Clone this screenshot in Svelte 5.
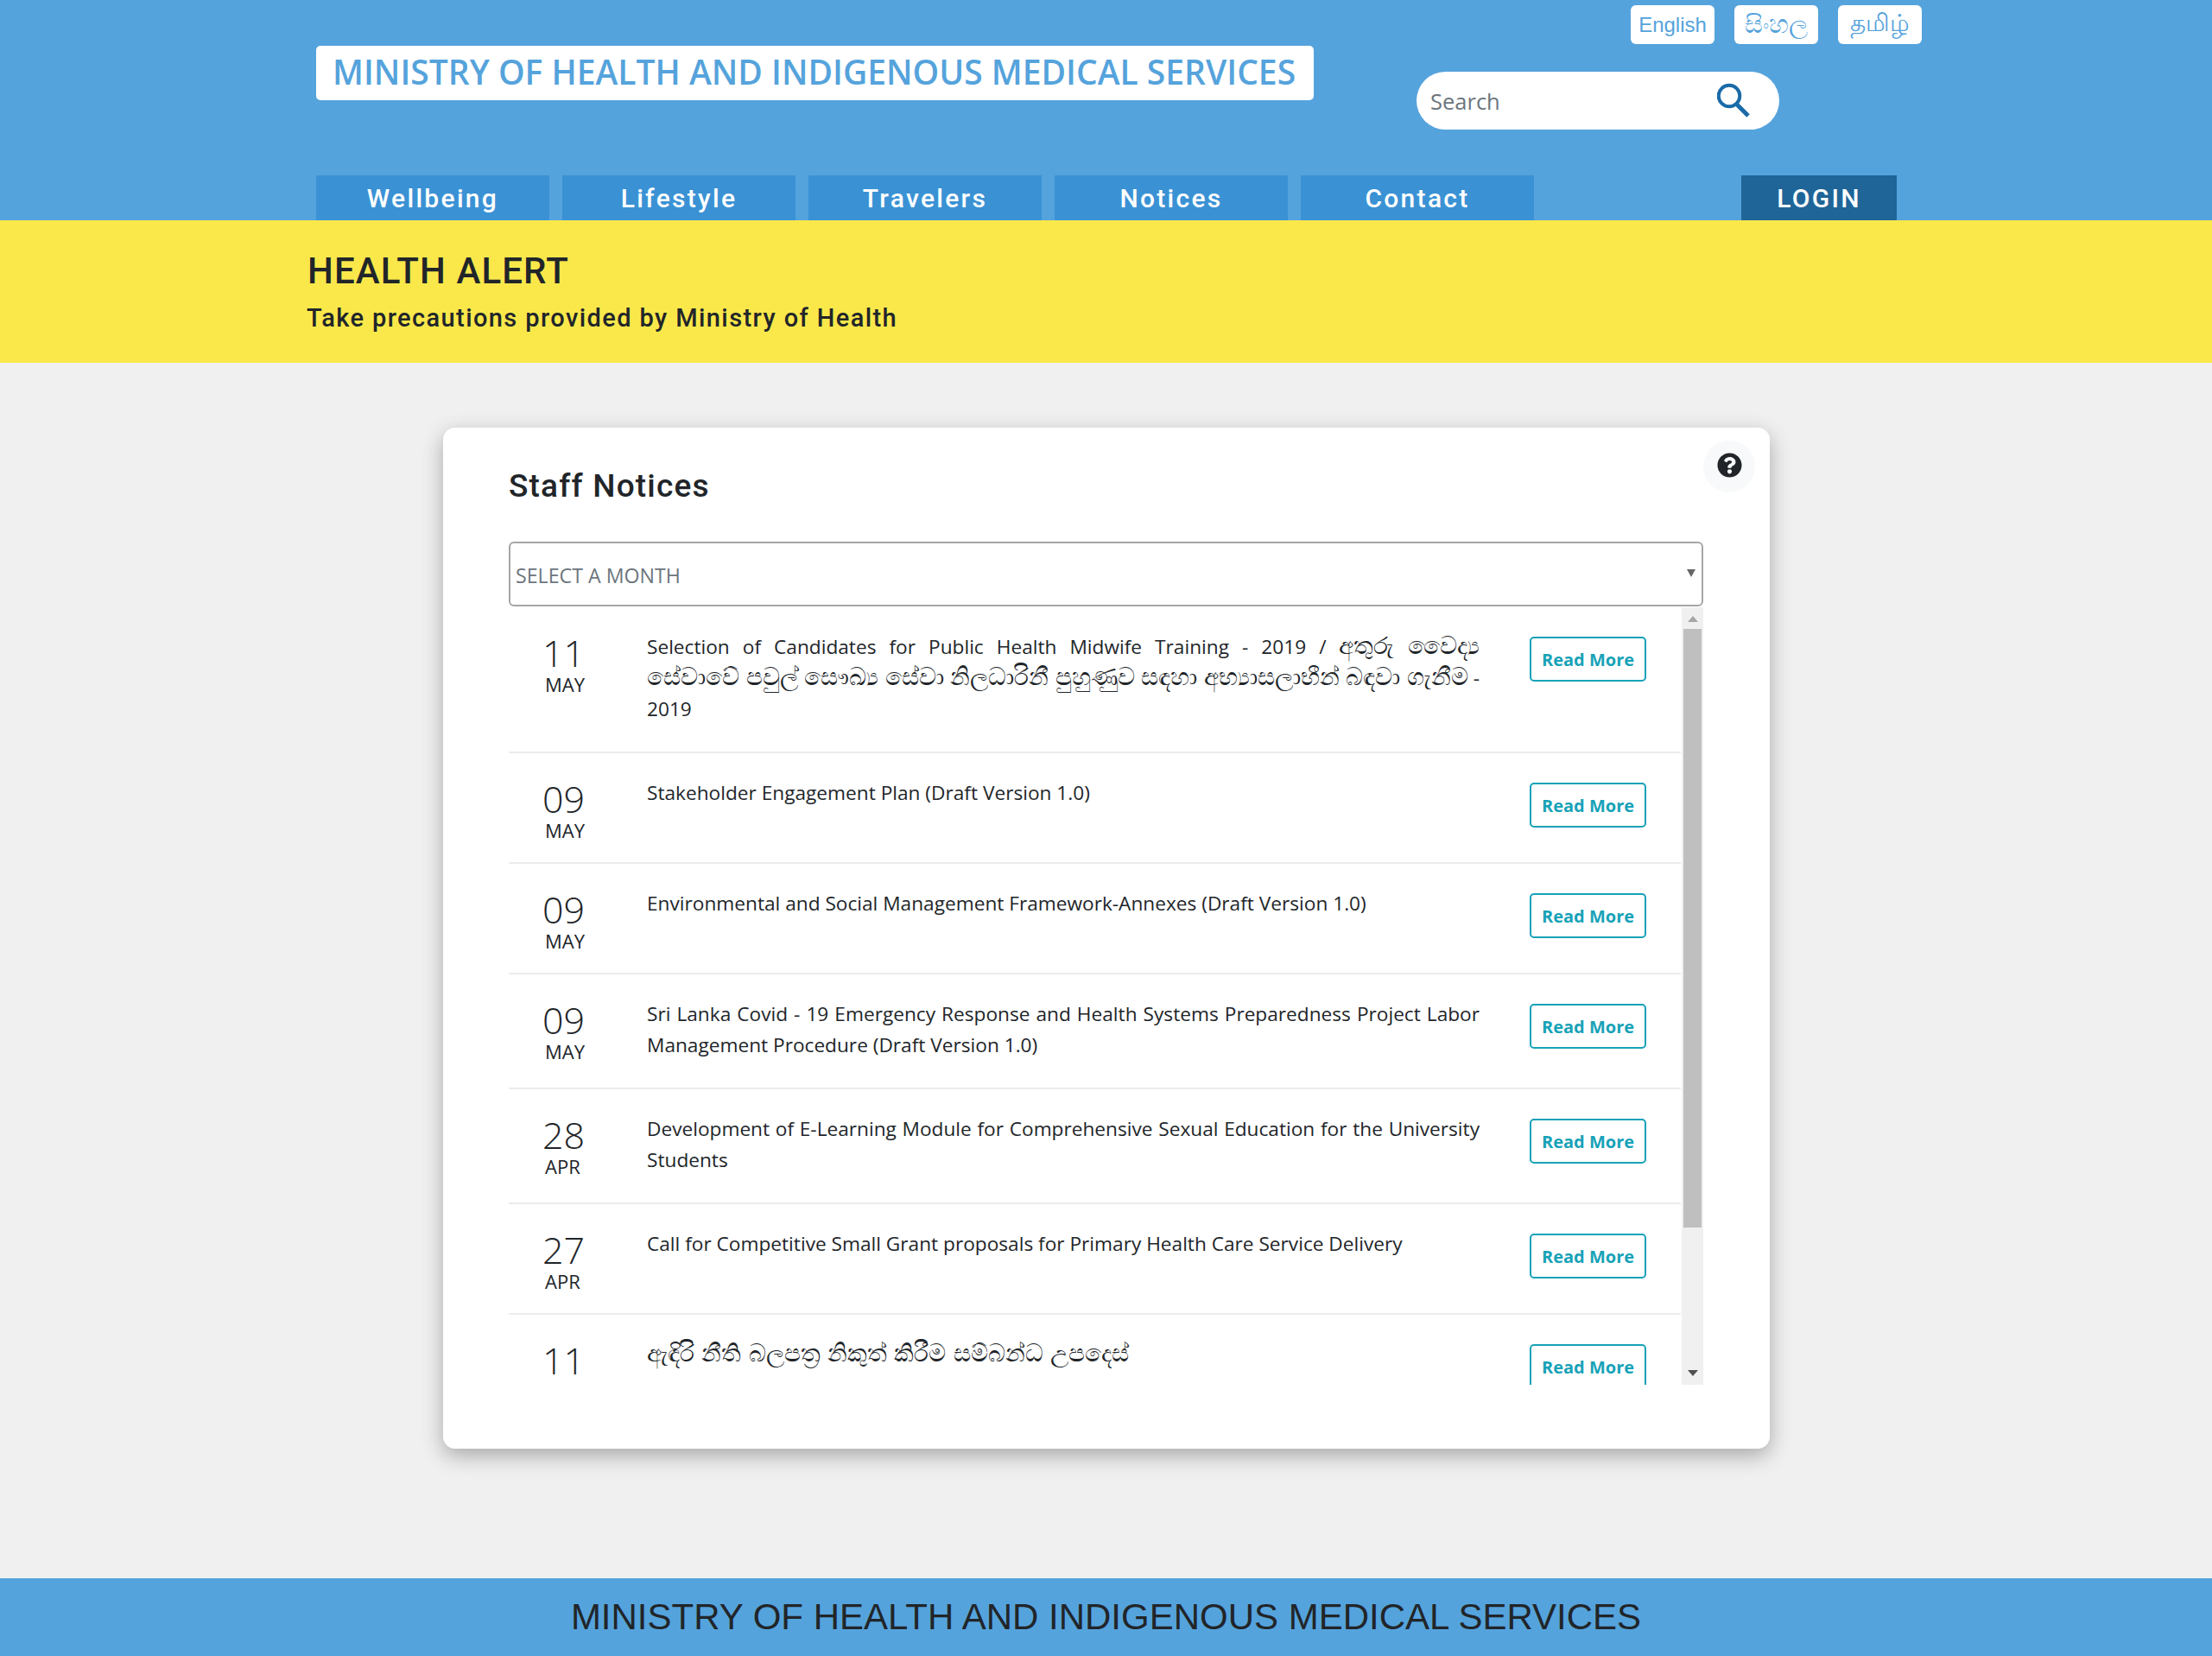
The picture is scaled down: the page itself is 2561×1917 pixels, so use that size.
<script>
  const nav = ['Wellbeing', 'Lifestyle', 'Travelers', 'Notices', 'Contact'];
  const langs = [
    { label: 'English', cls: 'en' },
    { label: 'සිංහල', cls: 'si' },
    { label: 'தமிழ்', cls: 'ta' }
  ];
  const notices = [
    { d: '11', m: 'MAY', parts: [
      { t: 'Selection of Candidates for Public Health Midwife Training - 2019 / ' },
      { t: 'අතුරු වෛද්‍ය සේවාවේ පවුල් සෞඛ්‍ය සේවා නිලධාරිනී පුහුණුව සඳහා අභ්‍යාසලාභීන් බඳවා ගැනීම', si: true },
      { t: ' - 2019' }
    ] },
    { d: '09', m: 'MAY', parts: [{ t: 'Stakeholder Engagement Plan (Draft Version 1.0)' }] },
    { d: '09', m: 'MAY', parts: [{ t: 'Environmental and Social Management Framework-Annexes (Draft Version 1.0)' }] },
    { d: '09', m: 'MAY', parts: [{ t: 'Sri Lanka Covid - 19 Emergency Response and Health Systems Preparedness Project Labor Management Procedure (Draft Version 1.0)' }] },
    { d: '28', m: 'APR', parts: [{ t: 'Development of E-Learning Module for Comprehensive Sexual Education for the University Students' }] },
    { d: '27', m: 'APR', parts: [{ t: 'Call for Competitive Small Grant proposals for Primary Health Care Service Delivery' }] },
    { d: '11', m: 'APR', parts: [{ t: 'ඇඳිරි නීති බලපත්‍ර නිකුත් කිරීම සම්බන්ධ උපදෙස්', si: true, spaced: true }] }
  ];
</script>

<div class="page">
  <header class="header">
    <div class="top">
      <div class="title">MINISTRY OF HEALTH AND INDIGENOUS MEDICAL SERVICES</div>
      <div class="tools">
        <div class="langs">
          {#each langs as l}<a class="lang {l.cls}">{l.label}</a>{/each}
        </div>
        <div class="search">
          <span class="ph">Search</span>
          <svg class="mag" viewBox="0 0 40 44" width="40" height="44">
            <circle cx="14" cy="16" r="12.3" fill="none" stroke="#1a6aa8" stroke-width="4"/>
            <path d="M22 25 L36 39" stroke="#1a6aa8" stroke-width="5" fill="none"/>
          </svg>
        </div>
      </div>
    </div>
    <nav class="nav">
      {#each nav as n}<a class="item">{n}</a>{/each}
      <a class="login">LOGIN</a>
    </nav>
  </header>

  <section class="alert">
    <h2>HEALTH ALERT</h2>
    <p>Take precautions provided by Ministry of Health</p>
  </section>

  <main class="main">
    <div class="card">
      <div class="help">
        <svg viewBox="0 0 512 512" width="29" height="29"><path fill="#212529" d="M504 256c0 137-111 248-248 248S8 393 8 256C8 119 119 8 256 8s248 111 248 248zM262.700 90c-54.500 0-89.300 23-116.500 63.800-3.500 5.300-2.400 12.400 2.700 16.300l34.700 26.300c5.200 3.900 12.600 3 16.700-2.100 17.900-22.700 30.100-35.800 57.300-35.800 20.400 0 45.700 13.100 45.700 33 0 15-12.400 22.700-32.600 34-23.600 13.200-54.800 29.700-54.800 70.900V300c0 6.600 5.400 12 12 12h56c6.600 0 12-5.400 12-12v-1.300c0-28.600 83.500-29.800 83.500-107.100C379.400 133.300 319 90 262.700 90zM256 339c-25.500 0-46.200 20.700-46.200 46.200 0 25.500 20.700 46.200 46.200 46.200s46.200-20.700 46.200-46.200c0-25.500-20.700-46.200-46.200-46.200z"/></svg>
      </div>
      <h3>Staff Notices</h3>
      <div class="select">
        <span>SELECT A MONTH</span>
        <i class="caret"></i>
      </div>
      <div class="scroller">
        <div class="rows">
          {#each notices as n}
            <div class="row">
              <div class="date">
                <div class="day">{n.d}</div>
                <div class="mon">{n.m}</div>
              </div>
              <div class="text">{#each n.parts as p}<span class:sinhala={p.si} class:spaced={p.spaced}>{p.t}</span>{/each}</div>
              <a class="btn">Read More</a>
            </div>
          {/each}
        </div>
        <div class="bar">
          <div class="arr up"></div>
          <div class="thumb"></div>
          <div class="arr down"></div>
        </div>
      </div>
    </div>
  </main>

  <footer class="footer">MINISTRY OF HEALTH AND INDIGENOUS MEDICAL SERVICES</footer>
</div>

<style>
  :global(body) { margin: 0; background: #f0f0f0; }
  .page { width: 2561px; height: 1917px; display: flex; flex-direction: column; font-family: "Open Sans", "Noto Sans", sans-serif; color: #212529; overflow: hidden; }

  .header { height: 255px; background: #55a3dc; padding: 0 336px 0 366px; box-sizing: border-box; display: flex; flex-direction: column; }
  .top { height: 203px; display: flex; justify-content: space-between; }
  .title { margin-top: 53px; height: 63px; box-sizing: border-box; background: #fff; border-radius: 5px; color: #55a3dc; font-size: 39px; font-weight: 600; line-height: 60px; padding: 0 19px; white-space: nowrap; width: 1155px; }
  .tools { display: flex; flex-direction: column; align-items: flex-end; }
  .langs { display: flex; gap: 23px; margin-top: 6px; }
  .lang { width: 97px; height: 45px; background: #fff; border-radius: 6px; color: #55a3dc; font-family: "Liberation Sans", "Noto Sans", sans-serif; display: flex; align-items: center; justify-content: center; }
  .en { font-size: 24px; }
  .si { font-size: 29px; }
  .ta { font-size: 28px; }
  .search { width: 420px; height: 67px; margin-top: 32px; margin-right: 165px; background: #fff; border-radius: 34px; display: flex; align-items: center; justify-content: space-between; padding: 0 32px 0 16px; box-sizing: border-box; }
  .ph { font-size: 25.5px; color: #6c757d; }

  .nav { display: flex; gap: 15px; height: 52px; }
  .item, .login { display: flex; align-items: center; justify-content: center; padding-top: 1px; box-sizing: border-box; font-family: Roboto, sans-serif; font-weight: 500; font-size: 30px; letter-spacing: 2.3px; color: #fff; }
  .item { width: 270px; background: #3a92d5; }
  .login { width: 180px; background: #1f6598; margin-left: 225px; }

  .alert { height: 165px; background: #fae84b; padding: 0 0 0 356px; box-sizing: border-box; }
  .alert h2 { margin: 0; padding-top: 35px; font-family: Roboto, sans-serif; font-weight: 500; font-size: 42px; line-height: 48px; letter-spacing: 1.1px; }
  .alert p { margin: 13px 0 0 -1px; font-family: Roboto, sans-serif; font-weight: 500; font-size: 29px; line-height: 34px; letter-spacing: 1.4px; }

  .main { height: 1407px; padding: 75px 512px 0 513px; box-sizing: border-box; }
  .card { position: relative; width: 1536px; height: 1182px; box-sizing: border-box; padding: 46px 77px 0 76px; background: #fff; border-radius: 14px; box-shadow: 0 8px 24px rgba(0,0,0,.3); }
  .help { position: absolute; right: 17px; top: 15px; width: 60px; height: 60px; border-radius: 50%; background: #f8f9fa; display: flex; align-items: center; justify-content: center; }
  .help svg { margin-bottom: 3px; }
  h3 { margin: 0; font-family: Roboto, sans-serif; font-weight: 500; font-size: 37px; line-height: 44px; letter-spacing: 1.2px; }
  .select { margin-top: 42px; height: 75px; box-sizing: border-box; border: 2px solid #a6a6a6; border-radius: 6px; display: flex; align-items: center; justify-content: space-between; padding: 2px 7px 0 6px; color: #6c757d; font-size: 23.2px; }
  .caret { width: 0; height: 0; border-left: 5px solid transparent; border-right: 5px solid transparent; border-top: 9px solid #666; margin-top: -4px; }

  .scroller { display: flex; height: 900px; margin-top: 1px; }
  .rows { flex: 1; overflow: hidden; margin-right: 1px; }
  .row { display: flex; align-items: flex-start; padding: 28px 0 22px; border-bottom: 2px solid #ececec; box-sizing: border-box; }
  .date { width: 160px; min-height: 76px; padding-left: 39px; box-sizing: border-box; }
  .day { font-size: 43px; font-weight: 350; line-height: 42px; margin-top: 4px; }
  .mon { font-size: 22px; line-height: 26px; margin-top: 2px; margin-left: 3px; }
  .text { width: 964px; margin-bottom: 9px; font-size: 22.66px; line-height: 36px; text-align: justify; }
  .sinhala { font-size: 28.4px; line-height: 0; }
  .spaced { word-spacing: 1px; }
  .btn { margin: 6px 0 0 58px; width: 135px; height: 52px; box-sizing: border-box; border: 2px solid #17a2b8; border-radius: 5px; color: #17a2b8; font-size: 20px; font-weight: 700; display: flex; align-items: center; justify-content: center; }

  .bar { width: 25px; background: #f0f0f0; display: flex; flex-direction: column; align-items: center; }
  .arr { width: 0; height: 0; border-left: 6px solid transparent; border-right: 6px solid transparent; flex: none; }
  .up { border-bottom: 7px solid #a6a6a6; margin: 10px 0 8px; }
  .thumb { width: 21px; height: 693px; background: #bfbfbf; flex: none; }
  .down { border-top: 7px solid #505050; margin-top: auto; margin-bottom: 10px; }

  .footer { height: 90px; background: #55a3dc; font-family: "Liberation Sans", sans-serif; font-size: 42px; display: flex; align-items: center; justify-content: center; }
</style>
